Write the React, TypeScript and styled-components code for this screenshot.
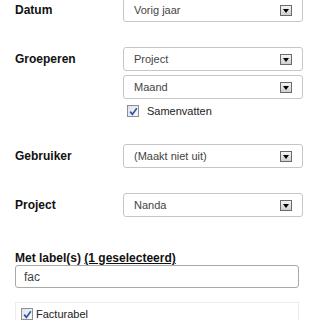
import React from 'react';
import styled, { createGlobalStyle } from 'styled-components';

const GlobalStyle = createGlobalStyle`
  html, body {
    margin: 0;
    padding: 0;
    background: #fff;
    overflow: hidden;
  }
  body {
    font-family: "Liberation Sans", Arial, sans-serif;
  }
`;

const Page = styled.div`
  margin-top: -2px;
  padding: 0 11px 0 15px;
`;

const Row = styled.div<{ $gap?: number }>`
  display: grid;
  grid-template-columns: 108px 1fr;
  align-items: start;
  margin-bottom: ${p => p.$gap ?? 25}px;
`;

const Label = styled.div`
  font-size: 12px;
  font-weight: bold;
  color: #111;
  line-height: 24px;
`;

const Stack = styled.div`
  display: flex;
  flex-direction: column;
  gap: 4px;
`;

const SelectBox = styled.div`
  box-sizing: border-box;
  height: 24px;
  display: flex;
  align-items: center;
  justify-content: space-between;
  padding: 0 10px 0 10px;
  border: 1px solid #c6c6c6;
  border-radius: 3px;
  background: #fff;
  font-size: 11px;
  color: #444;
`;

const ArrowButton = styled.span`
  box-sizing: border-box;
  width: 12px;
  height: 11px;
  margin-top: 1px;
  border: 1px solid #6a6a6a;
  background: linear-gradient(#f4f4f4, #cfcfcf);
  display: flex;
  align-items: center;
  justify-content: center;
  padding-top: 1px;
`;

const Triangle = styled.span`
  width: 0;
  height: 0;
  border-left: 3.5px solid transparent;
  border-right: 3.5px solid transparent;
  border-top: 4px solid #000;
`;

const CheckRow = styled.label<{ $indent?: number; $gap?: number }>`
  display: flex;
  align-items: center;
  gap: ${p => p.$gap ?? 8}px;
  padding-left: ${p => p.$indent ?? 0}px;
  font-size: 11px;
  color: #222;
  line-height: 14px;
`;

const CheckBox = styled.span`
  box-sizing: border-box;
  width: 12px;
  height: 12px;
  border: 1px solid #8e8f8f;
  background: linear-gradient(135deg, #dfe3ea, #f7f8fa);
  display: flex;
  align-items: center;
  justify-content: center;
`;

const LabelSection = styled.div`
  padding-top: 34px;
  padding-right: 4px;
`;

const SectionTitle = styled.div`
  font-size: 12px;
  font-weight: bold;
  color: #111;
  line-height: 14px;

  a {
    color: #111;
    text-decoration: underline;
  }
`;

const TextInput = styled.div`
  box-sizing: border-box;
  height: 23px;
  border: 1px solid #a9a9a9;
  border-radius: 3px;
  padding-left: 8px;
  display: flex;
  align-items: center;
  font-size: 12px;
  color: #444;
`;

const LabelList = styled.div`
  margin-top: 14px;
  border: 1px solid #ececec;
  border-bottom: none;
  padding: 4px 5px 0;
  height: 20px;
`;

const Check = () => (
  <svg width="9" height="9" viewBox="0 0 9 9">
    <path d="M1.2 4.6 L3.4 7.4 L7.8 1.2" fill="none" stroke="#2e56a8" strokeWidth="1.7" />
  </svg>
);

const Select: React.FC<{ value: string }> = ({ value }) => (
  <SelectBox>
    <span>{value}</span>
    <ArrowButton>
      <Triangle />
    </ArrowButton>
  </SelectBox>
);

export default function App() {
  return (
    <>
      <GlobalStyle />
      <Page>
        <Row>
          <Label>Datum</Label>
          <Select value="Vorig jaar" />
        </Row>
        <Row $gap={26}>
          <Label>Groeperen</Label>
          <Stack>
            <Select value="Project" />
            <Select value="Maand" />
            <CheckRow $indent={4} style={{ marginTop: 1 }}>
              <CheckBox>
                <Check />
              </CheckBox>
              Samenvatten
            </CheckRow>
          </Stack>
        </Row>
        <Row>
          <Label>Gebruiker</Label>
          <Select value="(Maakt niet uit)" />
        </Row>
        <Row $gap={0}>
          <Label>Project</Label>
          <Select value="Nanda" />
        </Row>
        <LabelSection>
          <SectionTitle>
            Met label(s) <a>(1 geselecteerd)</a>
          </SectionTitle>
          <TextInput>fac</TextInput>
          <LabelList>
            <CheckRow $gap={3}>
              <CheckBox>
                <Check />
              </CheckBox>
              Facturabel
            </CheckRow>
          </LabelList>
        </LabelSection>
      </Page>
    </>
  );
}
